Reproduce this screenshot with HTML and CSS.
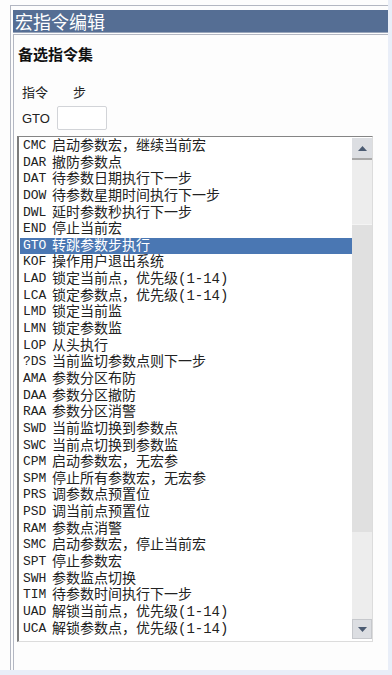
FILE: index.html
```html
<!DOCTYPE html>
<html lang="zh-CN">
<head>
  <meta charset="UTF-8" />
  <meta name="viewport" content="width=device-width, initial-scale=1" />
  <title>宏指令编辑</title>
  <link rel="stylesheet" href="styles.css">
</head>
<body>
  <div class="window">
    <div class="frame">
      <div class="title">宏指令编辑</div>
      <div class="panel">
        <h2>备选指令集</h2>
        <div class="labels">
          <span class="lbl-cmd">指令</span>
          <span>步</span>
        </div>
        <div class="cmd-row">
          <span class="cmd-name">GTO</span>
          <input type="text" class="step-input">
        </div>

        <div class="listbox">
          <div class="items">
            <div class="item"><span class="code">CMC</span><span class="desc">启动参数宏，继续当前宏</span></div>
            <div class="item"><span class="code">DAR</span><span class="desc">撤防参数点</span></div>
            <div class="item"><span class="code">DAT</span><span class="desc">待参数日期执行下一步</span></div>
            <div class="item"><span class="code">DOW</span><span class="desc">待参数星期时间执行下一步</span></div>
            <div class="item"><span class="code">DWL</span><span class="desc">延时参数秒执行下一步</span></div>
            <div class="item"><span class="code">END</span><span class="desc">停止当前宏</span></div>
            <div class="item selected"><span class="code">GTO</span><span class="desc">转跳参数步执行</span></div>
            <div class="item"><span class="code">KOF</span><span class="desc">操作用户退出系统</span></div>
            <div class="item"><span class="code">LAD</span><span class="desc">锁定当前点，优先级(1-14)</span></div>
            <div class="item"><span class="code">LCA</span><span class="desc">锁定参数点，优先级(1-14)</span></div>
            <div class="item"><span class="code">LMD</span><span class="desc">锁定当前监</span></div>
            <div class="item"><span class="code">LMN</span><span class="desc">锁定参数监</span></div>
            <div class="item"><span class="code">LOP</span><span class="desc">从头执行</span></div>
            <div class="item"><span class="code">?DS</span><span class="desc">当前监切参数点则下一步</span></div>
            <div class="item"><span class="code">AMA</span><span class="desc">参数分区布防</span></div>
            <div class="item"><span class="code">DAA</span><span class="desc">参数分区撤防</span></div>
            <div class="item"><span class="code">RAA</span><span class="desc">参数分区消警</span></div>
            <div class="item"><span class="code">SWD</span><span class="desc">当前监切换到参数点</span></div>
            <div class="item"><span class="code">SWC</span><span class="desc">当前点切换到参数监</span></div>
            <div class="item"><span class="code">CPM</span><span class="desc">启动参数宏，无宏参</span></div>
            <div class="item"><span class="code">SPM</span><span class="desc">停止所有参数宏，无宏参</span></div>
            <div class="item"><span class="code">PRS</span><span class="desc">调参数点预置位</span></div>
            <div class="item"><span class="code">PSD</span><span class="desc">调当前点预置位</span></div>
            <div class="item"><span class="code">RAM</span><span class="desc">参数点消警</span></div>
            <div class="item"><span class="code">SMC</span><span class="desc">启动参数宏，停止当前宏</span></div>
            <div class="item"><span class="code">SPT</span><span class="desc">停止参数宏</span></div>
            <div class="item"><span class="code">SWH</span><span class="desc">参数监点切换</span></div>
            <div class="item"><span class="code">TIM</span><span class="desc">待参数时间执行下一步</span></div>
            <div class="item"><span class="code">UAD</span><span class="desc">解锁当前点，优先级(1-14)</span></div>
            <div class="item"><span class="code">UCA</span><span class="desc">解锁参数点，优先级(1-14)</span></div>
          </div>
          <div class="scrollbar">
            <div class="sb-btn sb-up">
              <svg width="9" height="5" viewBox="0 0 9 5"><polygon points="0,5 9,5 4.5,0" fill="#4b5b72"/></svg>
            </div>
            <div class="sb-track">
              <div class="sb-thumb"></div>
            </div>
            <div class="sb-btn sb-down">
              <svg width="9" height="5" viewBox="0 0 9 5"><polygon points="0,0 9,0 4.5,5" fill="#4b5b72"/></svg>
            </div>
          </div>
        </div>
      </div>
    </div>
  </div>
</body>
</html>
```

FILE: styles.css
```css
body {
  margin: 0;
  background-color: #e9eef8;
  font-family: "Noto Sans CJK SC", "Liberation Sans", sans-serif;
  color: #222;
}

.window {
  width: 388px;
  height: 670px;
  box-sizing: border-box;
  padding: 5px 0 0 10px;
  background-color: #fdfdfd;
  display: flex;
}

.frame {
  flex: 1;
  display: flex;
  flex-direction: column;
  border-top: 1px solid #b3b7c2;
  border-left: 1px solid #b3b7c2;
  padding: 4px 0 0 2px;
}

.title {
  height: 22px;
  line-height: 22px;
  background-color: #556e94;
  color: #fff;
  font-size: 18px;
  padding-left: 2px;
  border-bottom: 1px solid #9aa6bb;
}

.panel {
  flex: 1;
  margin-top: 1px;
  border-top: 1px solid #b3b7c2;
  border-left: 1px solid #b3b7c2;
  padding-left: 3px;
}

h2 {
  margin: 9px 0 0 1px;
  font-size: 15px;
  font-weight: bold;
  line-height: 20px;
  color: #111;
}

.labels {
  margin-top: 21px;
  padding-left: 5px;
  font-size: 13px;
  line-height: 14px;
  display: flex;
}

.lbl-cmd {
  width: 51px;
}

.cmd-row {
  display: flex;
  align-items: center;
  margin-top: 7px;
  padding-left: 5px;
}

.cmd-name {
  font-family: "Liberation Sans", sans-serif;
  font-size: 13px;
  width: 35px;
}

.step-input {
  width: 50px;
  height: 24px;
  box-sizing: border-box;
  border: 1px solid #d2d4d8;
  border-radius: 2px;
  margin: 0;
  padding: 0;
}

.listbox {
  margin-top: 6px;
  width: 356px;
  height: 506px;
  box-sizing: border-box;
  border-top: 1px solid #858585;
  border-left: 2px solid #7c7c7c;
  border-right: 1px solid #dcdcdc;
  border-bottom: 1px solid #dcdcdc;
  display: flex;
  background-color: #fff;
}

.items {
  flex: 1;
  padding: 1px 0 0 1px;
}

.item {
  height: 16.65px;
  line-height: 16.65px;
  white-space: nowrap;
  padding-left: 3px;
  display: flex;
}

.item.selected {
  background-color: #4a77b3;
  color: #fff;
}

.code {
  width: 29px;
  font-family: "Liberation Mono", monospace;
  font-size: 13px;
}

.desc {
  font-family: "Liberation Mono", "Noto Sans CJK SC", monospace;
  font-size: 14px;
}

.scrollbar {
  width: 20px;
  margin: 1px 0 2px;
  display: flex;
  flex-direction: column;
  background-color: #ededed;
}

.sb-btn {
  height: 20px;
  box-sizing: border-box;
  background-color: #dcdee2;
  display: flex;
  align-items: center;
  justify-content: center;
}

.sb-up {
  height: 22px;
  border-bottom: 2px solid #a9a9a9;
}

.sb-down {
  border: 1px solid #c6c8cc;
}

.sb-track {
  flex: 1;
  padding-top: 64px;
}

.sb-thumb {
  height: 307px;
  background-color: #e0e0e0;
  border-top: 1px solid #f4f4f4;
}
```
